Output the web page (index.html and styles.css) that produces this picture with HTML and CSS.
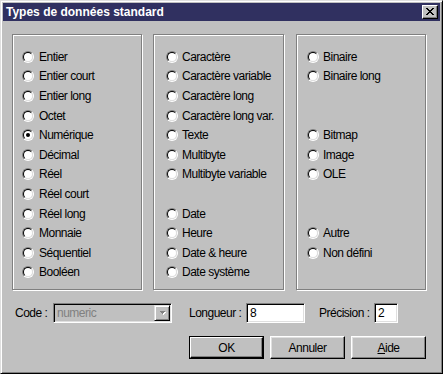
FILE: index.html
```html
<!DOCTYPE html>
<html lang="fr">
<head>
<meta charset="utf-8">
<title>Types de données standard</title>
<link rel="stylesheet" href="styles.css">
</head>
<body>
<div class="window">
  <div class="titlebar">
    <span class="title">Types de données standard</span>
    <span class="close">
      <svg width="8" height="7" viewBox="0 0 8 7" shape-rendering="crispEdges">
        <path fill="#000" d="M0 0h2v1H0zM6 0h2v1H6zM1 1h2v1H1zM5 1h2v1H5zM2 2h4v1H2zM3 3h2v1H3zM2 4h4v1H2zM1 5h2v1H1zM5 5h2v1H5zM0 6h2v1H0zM6 6h2v1H6z"/>
      </svg>
    </span>
  </div>
  <div class="content">
    <div class="groups">
      <div class="group g1">
        <div class="opt"><span class="radio"><span class="in"></span></span>Entier</div>
        <div class="opt"><span class="radio"><span class="in"></span></span>Entier court</div>
        <div class="opt"><span class="radio"><span class="in"></span></span>Entier long</div>
        <div class="opt"><span class="radio"><span class="in"></span></span>Octet</div>
        <div class="opt"><span class="radio"><span class="in"><span class="dot"></span></span></span>Numérique</div>
        <div class="opt"><span class="radio"><span class="in"></span></span>Décimal</div>
        <div class="opt"><span class="radio"><span class="in"></span></span>Réel</div>
        <div class="opt"><span class="radio"><span class="in"></span></span>Réel court</div>
        <div class="opt"><span class="radio"><span class="in"></span></span>Réel long</div>
        <div class="opt"><span class="radio"><span class="in"></span></span>Monnaie</div>
        <div class="opt"><span class="radio"><span class="in"></span></span>Séquentiel</div>
        <div class="opt"><span class="radio"><span class="in"></span></span>Booléen</div>
      </div>
      <div class="group g2">
        <div class="opt"><span class="radio"><span class="in"></span></span>Caractère</div>
        <div class="opt"><span class="radio"><span class="in"></span></span>Caractère variable</div>
        <div class="opt"><span class="radio"><span class="in"></span></span>Caractère long</div>
        <div class="opt"><span class="radio"><span class="in"></span></span>Caractère long var.</div>
        <div class="opt"><span class="radio"><span class="in"></span></span>Texte</div>
        <div class="opt"><span class="radio"><span class="in"></span></span>Multibyte</div>
        <div class="opt"><span class="radio"><span class="in"></span></span>Multibyte variable</div>
        <div class="opt blank"></div>
        <div class="opt"><span class="radio"><span class="in"></span></span>Date</div>
        <div class="opt"><span class="radio"><span class="in"></span></span>Heure</div>
        <div class="opt"><span class="radio"><span class="in"></span></span>Date &amp; heure</div>
        <div class="opt"><span class="radio"><span class="in"></span></span>Date système</div>
      </div>
      <div class="group g3">
        <div class="opt"><span class="radio"><span class="in"></span></span>Binaire</div>
        <div class="opt"><span class="radio"><span class="in"></span></span>Binaire long</div>
        <div class="opt blank"></div>
        <div class="opt blank"></div>
        <div class="opt"><span class="radio"><span class="in"></span></span>Bitmap</div>
        <div class="opt"><span class="radio"><span class="in"></span></span>Image</div>
        <div class="opt"><span class="radio"><span class="in"></span></span>OLE</div>
        <div class="opt blank"></div>
        <div class="opt blank"></div>
        <div class="opt"><span class="radio"><span class="in"></span></span>Autre</div>
        <div class="opt"><span class="radio"><span class="in"></span></span>Non défini</div>
      </div>
    </div>
    <div class="fields">
      <span class="lbl lbl-code">Code :</span>
      <span class="combo">
        <span class="combo-text">numeric</span>
        <span class="drop">
          <svg width="7" height="5" viewBox="0 0 7 5" shape-rendering="crispEdges">
            <path fill="#fff" d="M2 1h5v1H2zM3 2h3v1H3zM4 3h1v1H4z"/>
            <path fill="#808080" d="M1 0h5v1H1zM2 1h3v1H2zM3 2h1v1H3z"/>
          </svg>
        </span>
      </span>
      <span class="lbl lbl-len">Longueur :</span>
      <span class="edit edit-len">8</span>
      <span class="lbl lbl-prec">Précision :</span>
      <span class="edit edit-prec">2</span>
    </div>
    <div class="buttons">
      <span class="btn default"><span class="face">OK</span></span>
      <span class="btn"><span class="face">Annuler</span></span>
      <span class="btn"><span class="face"><u>A</u>ide</span></span>
    </div>
  </div>
</div>
</body>
</html>
```

FILE: styles.css
```css
html, body {
  margin: 0;
  padding: 0;
  background: #c0c0c0;
}

body {
  font-family: "Liberation Sans", Arial, sans-serif;
  font-size: 12px;
  letter-spacing: -0.5px;
  color: #000;
}

.window {
  width: 443px;
  height: 374px;
  box-sizing: border-box;
  background: #c0c0c0;
  border: 1px solid;
  border-color: #dfdfdf #000 #000 #dfdfdf;
  box-shadow: inset 1px 1px #fff, inset -1px -1px #808080;
  padding: 2px;
  display: flex;
  flex-direction: column;
}

.titlebar {
  height: 18px;
  background: #303060;
  display: flex;
  align-items: center;
  justify-content: space-between;
  padding: 0 2px 0 3px;
}

.title {
  font-family: "Liberation Sans", Arial, sans-serif;
  font-weight: bold;
  font-size: 12px;
  color: #fff;
  letter-spacing: 0;
}

.close {
  width: 16px;
  height: 14px;
  box-sizing: border-box;
  background: #c0c0c0;
  border: 1px solid;
  border-color: #fff #000 #000 #fff;
  box-shadow: inset -1px -1px #808080;
  display: flex;
  align-items: flex-start;
  justify-content: flex-start;
  padding: 2px 0 0 3px;
}

.close svg {
  display: block;
}

.content {
  flex: 1;
  padding: 13px 14px 0 9px;
  display: flex;
  flex-direction: column;
}

.groups {
  display: flex;
  height: 256px;
}

.group {
  box-sizing: border-box;
  height: 256px;
  border: 1px solid #808080;
  box-shadow: inset 1px 1px #fff, 1px 1px #fff;
  padding-top: 12px;
  display: flex;
  flex-direction: column;
}

.g1 {
  width: 130px;
  padding-left: 9px;
}

.g2 {
  width: 131px;
  margin-left: 11px;
  padding-left: 12px;
}

.g3 {
  width: 130px;
  margin-left: 12px;
  padding-left: 10px;
}

.opt {
  height: 19.6px;
  display: flex;
  align-items: center;
  gap: 5px;
  white-space: nowrap;
}

.g2 .opt, .g3 .opt {
  gap: 4px;
}

.radio {
  width: 12px;
  height: 12px;
  box-sizing: border-box;
  flex: none;
  border-radius: 50%;
  border: 1px solid;
  border-color: #808080 #fff #fff #808080;
  display: flex;
}

.radio .in {
  flex: 1;
  border-radius: 50%;
  border: 1px solid;
  border-color: #000 #dfdfdf #dfdfdf #000;
  background: #fff;
  display: flex;
  align-items: center;
  justify-content: center;
}

.dot {
  width: 4px;
  height: 4px;
  border-radius: 50%;
  background: #000;
}

.fields {
  margin-top: 13px;
  height: 20px;
  display: flex;
  align-items: center;
}

.lbl {
  white-space: nowrap;
}

.lbl-code {
  margin-left: 3px;
  width: 38px;
}

.lbl-len {
  margin-left: 17px;
  width: 57px;
}

.lbl-prec {
  margin-left: 14px;
  width: 55px;
}

.combo, .edit {
  height: 20px;
  box-sizing: border-box;
  border: 1px solid;
  border-color: #808080 #fff #fff #808080;
  box-shadow: inset 1px 1px #000, inset -1px -1px #dfdfdf;
  display: flex;
  align-items: center;
}

.combo {
  width: 119px;
  background: #c0c0c0;
  padding: 2px 1px 2px 2px;
  justify-content: space-between;
}

.combo-text {
  color: #808080;
  padding-left: 1px;
}

.drop {
  width: 16px;
  height: 16px;
  box-sizing: border-box;
  background: #c0c0c0;
  border: 1px solid;
  border-color: #dfdfdf #000 #000 #dfdfdf;
  box-shadow: inset 1px 1px #fff, inset -1px -1px #808080;
  display: flex;
  align-items: center;
  justify-content: center;
}

.drop svg {
  display: block;
}

.edit {
  background: #fff;
  padding-left: 3px;
}

.edit-len {
  width: 59px;
}

.edit-prec {
  width: 24px;
}

.buttons {
  margin-top: 13px;
  display: flex;
  justify-content: flex-end;
  gap: 6px;
}

.btn {
  width: 75px;
  height: 23px;
  box-sizing: border-box;
  display: flex;
  border: 1px solid;
  border-color: #fff #000 #000 #fff;
  box-shadow: inset -1px -1px #808080, inset 1px 1px #dfdfdf;
  background: #c0c0c0;
}

.btn.default {
  border: 1px solid #000;
  box-shadow: none;
}

.face {
  flex: 1;
  display: flex;
  align-items: center;
  justify-content: center;
}

.btn.default .face {
  border: 1px solid;
  border-color: #fff #000 #000 #fff;
  box-shadow: inset -1px -1px #808080;
}

.face u {
  text-decoration: underline;
  text-underline-offset: 1px;
}
```
